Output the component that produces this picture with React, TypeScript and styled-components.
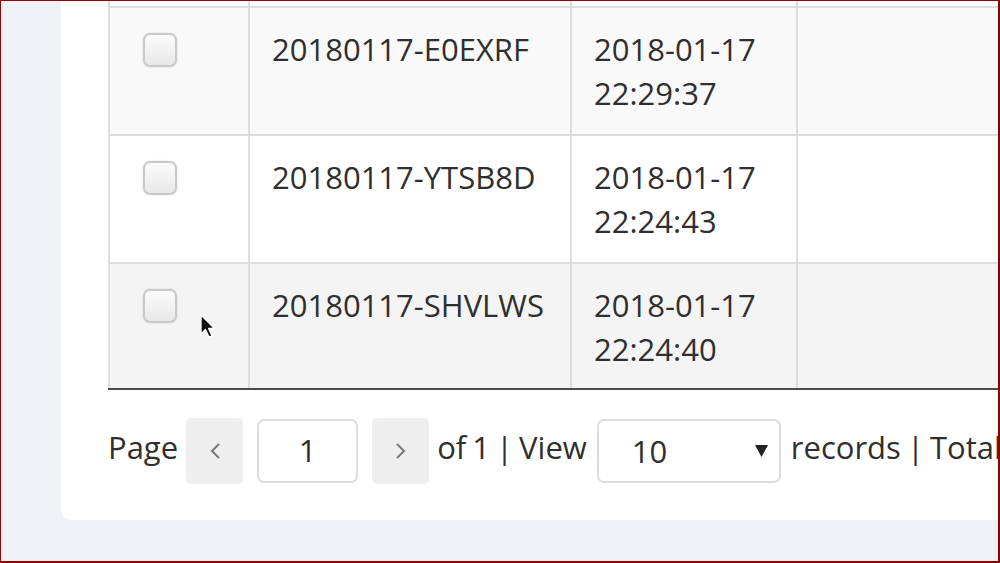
import React from 'react';
import styled, { createGlobalStyle } from 'styled-components';

const GlobalStyle = createGlobalStyle`
  html, body { margin: 0; padding: 0; }
  body { font-family: "Open Sans", "Liberation Sans", sans-serif; color: #333; }
`;

const Frame = styled.div`
  position: relative;
  width: 1000px;
  height: 563px;
  box-sizing: border-box;
  border-style: solid;
  border-color: #8b0000;
  border-width: 1px 2px 2px 1px;
  background: #eef1f6;
  overflow: hidden;
`;

const Card = styled.div`
  margin: -123px 0 0 60px;
  width: 1200px;
  box-sizing: border-box;
  background: #fff;
  border-radius: 10px;
  padding: 0 0 36px 47px;
`;

const Table = styled.div`
  width: max-content;
  border-bottom: 2px solid #4d4d4d;
`;

const Row = styled.div<{ $bg: string; $h?: number }>`
  display: grid;
  grid-template-columns: 140px 322px 226px 400px;
  height: ${(p) => p.$h ?? 128}px;
  background: ${(p) => p.$bg};
`;

const Cell = styled.div<{ $padLeft?: number }>`
  box-sizing: border-box;
  border-left: 2px solid #ddd;
  border-top: 2px solid #ddd;
  padding: 19px 21px 0 ${(p) => p.$padLeft ?? 22}px;
  font-size: 31px;
  line-height: 44px;
  color: #2f2f2f;
`;

const CheckBox = styled.span`
  display: block;
  width: 34px;
  height: 34px;
  margin-top: 6px;
  box-sizing: border-box;
  border: 2px solid #c9c9c9;
  border-radius: 7px;
  background: linear-gradient(#fbfbfb, #e7e7e7);
  box-shadow: 0 0 2px rgba(0, 0, 0, 0.15);
`;

const Pager = styled.div`
  display: flex;
  align-items: center;
  gap: 8px;
  margin-top: 28px;
  height: 66px;
  font-size: 31px;
  color: #2f2f2f;
  white-space: nowrap;
`;

const Label = styled.span`
  line-height: 44px;
  padding-bottom: 8px;
  word-spacing: -2px;
`;

const NavButton = styled.button`
  width: 57px;
  height: 66px;
  border: none;
  border-radius: 5px;
  background: #eeeeee;
  display: flex;
  align-items: center;
  justify-content: center;
  padding: 0;
`;

const PageInput = styled.input`
  width: 101px;
  height: 64px;
  margin: 0 6px;
  box-sizing: border-box;
  border: 2px solid #ddd;
  border-radius: 7px;
  font: inherit;
  font-size: 31px;
  color: #2f2f2f;
  text-align: center;
  padding: 0 0 2px;
  background: #fff;
`;

const SelectBox = styled.div`
  width: 184px;
  height: 64px;
  margin: 0 2px;
  box-sizing: border-box;
  border: 2px solid #ddd;
  border-radius: 7px;
  display: flex;
  align-items: center;
  justify-content: space-between;
  padding: 0 11px 0 33px;
  line-height: 44px;
`;

const Cursor = styled.svg`
  position: absolute;
  left: 199px;
  top: 313px;
`;

const rows = [
  { id: '20180117-E0EXRF', date: '2018-01-17', time: '22:29:37', bg: '#f9f9f9' },
  { id: '20180117-YTSB8D', date: '2018-01-17', time: '22:24:43', bg: '#ffffff' },
  { id: '20180117-SHVLWS', date: '2018-01-17', time: '22:24:40', bg: '#f4f4f4' },
];

export default function App() {
  return (
    <>
      <GlobalStyle />
      <Frame>
        <Card>
          <Table>
            <Row $bg="#ffffff">
              <Cell $padLeft={33} />
              <Cell />
              <Cell />
              <Cell />
            </Row>
            {rows.map((r, i) => (
              <Row key={r.id} $bg={r.bg} $h={i === rows.length - 1 ? 126 : 128}>
                <Cell $padLeft={33}>
                  <CheckBox />
                </Cell>
                <Cell>{r.id}</Cell>
                <Cell>
                  {r.date}
                  <br />
                  {r.time}
                </Cell>
                <Cell />
              </Row>
            ))}
          </Table>
          <Pager>
            <Label>Page</Label>
            <NavButton aria-label="Previous">
              <svg width="12" height="16" viewBox="0 0 12 16">
                <polyline points="10,1 3,8 10,15" fill="none" stroke="#7a7a7a" strokeWidth="2" />
              </svg>
            </NavButton>
            <PageInput value="1" readOnly />
            <NavButton aria-label="Next">
              <svg width="12" height="16" viewBox="0 0 12 16">
                <polyline points="2,1 9,8 2,15" fill="none" stroke="#7a7a7a" strokeWidth="2" />
              </svg>
            </NavButton>
            <Label>of 1 | View</Label>
            <SelectBox>
              <span>10</span>
              <svg width="13" height="12" viewBox="0 0 13 12">
                <polygon points="0,0 13,0 6.5,12" fill="#222" />
              </svg>
            </SelectBox>
            <Label>records | Total</Label>
          </Pager>
        </Card>
        <Cursor width="18" height="26" viewBox="0 0 18 26">
          <path d="M1 1 L1 20 L5.5 15.5 L9 23 L12 21.8 L8.6 14.5 L14.5 14.5 Z" fill="#111" stroke="#fff" strokeWidth="1.3" strokeLinejoin="round" />
        </Cursor>
      </Frame>
    </>
  );
}
